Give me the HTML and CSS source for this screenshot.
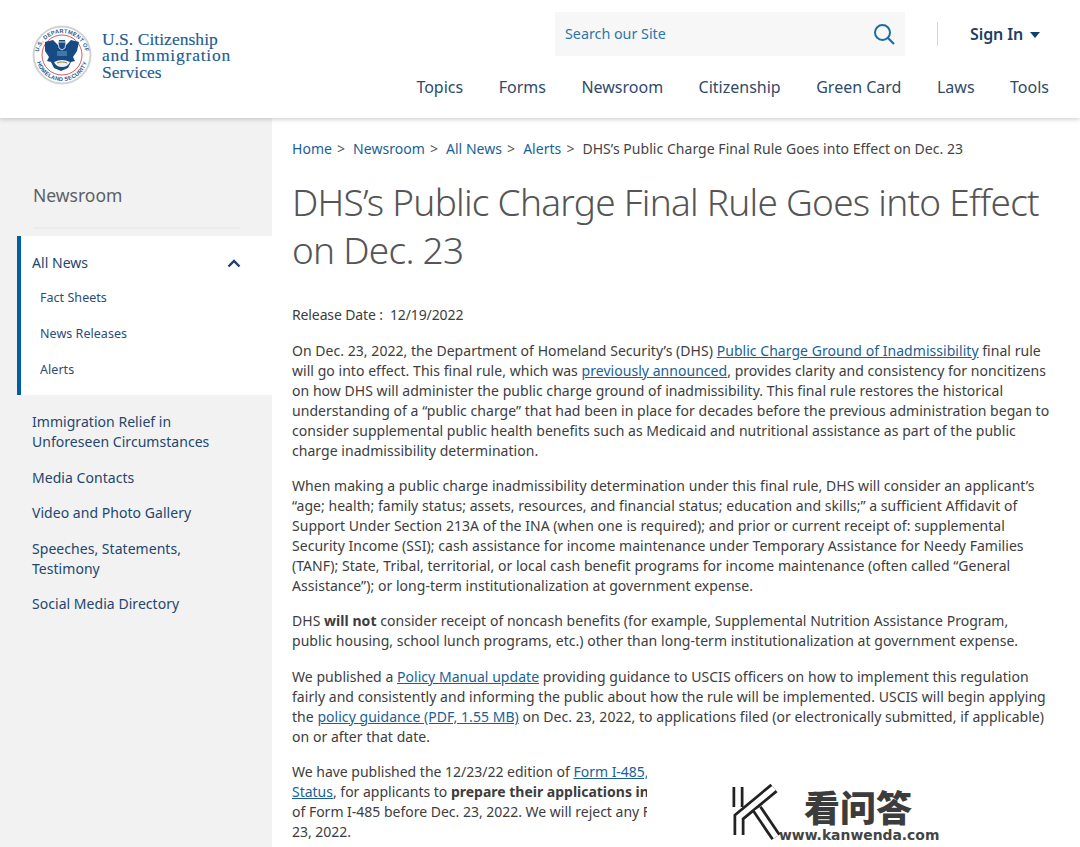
FILE: index.html
```html
<!DOCTYPE html>
<html lang="en">
<head>
<meta charset="utf-8">
<title>DHS's Public Charge Final Rule Goes into Effect on Dec. 23</title>
<link rel="stylesheet" href="styles.css">
</head>
<body>
<header class="site-header">
  <a class="brand" href="#">
    <svg class="seal" viewBox="0 0 60 60" width="60" height="60" aria-hidden="true">
      <defs>
        <path id="ring-top" d="M6 32A24 24 0 0 1 54 32"/>
        <path id="ring-bottom" d="M4 30A26 26 0 0 0 56 30"/>
      </defs>
      <circle cx="30" cy="30" r="29.500" fill="#cfd3d7"/>
      <circle cx="30" cy="30" r="27.500" fill="#fff"/>
      <text class="seal-text"><textPath href="#ring-top" startOffset="50%" text-anchor="middle">U.S. DEPARTMENT OF</textPath></text>
      <text class="seal-text"><textPath href="#ring-bottom" startOffset="50%" text-anchor="middle">HOMELAND SECURITY</textPath></text>
      <circle cx="30" cy="30" r="20" fill="#fff" stroke="#d85a66" stroke-width="1"/>
      <path d="M13 17l8-2 5 5 1-5h6l1 5 5-5 8 2-2 9-4 6 2 4-4 1-3 6-7 3-7-3-3-6-4-1 2-4-4-6z" fill="#174a82"/>
      <path d="M26 17h8l-1 6-3 2-3-2z" fill="#174a82" stroke="#fff" stroke-width=".8"/>
      <path d="M22 37q8-4 16 0-2 5-8 5t-8-5z" fill="#eef1f3"/>
      <path d="M25 38q5-2 10 0" stroke="#9a8a55" stroke-width="1.200" fill="none"/>
      <path d="M25 26h10v5h-10z" fill="#3f78ad"/>
    </svg>
    <span class="brand-name"><span>U.S. Citizenship</span><span class="brand-wide">and Immigration</span><span>Services</span></span>
  </a>
  <div class="header-right">
    <div class="utility">
      <form class="search">
        <span class="search-label">Search our Site</span>
        <svg class="search-icon" viewBox="0 0 22 22" width="22" height="22" aria-hidden="true"><circle cx="9.500" cy="9.500" r="7.500" fill="none" stroke="#1a6ea8" stroke-width="2"/><path d="M15 15l6 6" stroke="#1a6ea8" stroke-width="2.200" fill="none"/></svg>
      </form>
      <div class="signin">Sign In <span class="caret"></span></div>
    </div>
    <nav class="main-nav">
      <a href="#">Topics</a><a href="#">Forms</a><a href="#">Newsroom</a><a href="#">Citizenship</a><a href="#">Green Card</a><a href="#">Laws</a><a href="#">Tools</a>
    </nav>
  </div>
</header>
<div class="layout">
  <aside class="sidebar">
    <h2 class="side-title">Newsroom</h2>
    <div class="side-active">
      <div class="side-head"><a href="#">All News</a>
        <svg viewBox="0 0 14 9" width="14" height="9" aria-hidden="true"><path d="M1.500 7.500L7 2l5.500 5.500" fill="none" stroke="#1c3f72" stroke-width="2.400"/></svg>
      </div>
      <a class="side-sub" href="#">Fact Sheets</a>
      <a class="side-sub" href="#">News Releases</a>
      <a class="side-sub" href="#">Alerts</a>
    </div>
    <ul class="side-list">
      <li><a href="#">Immigration Relief in Unforeseen Circumstances</a></li>
      <li><a href="#">Media Contacts</a></li>
      <li><a href="#">Video and Photo Gallery</a></li>
      <li><a href="#">Speeches, Statements, Testimony</a></li>
      <li><a href="#">Social Media Directory</a></li>
    </ul>
  </aside>
  <main class="content">
    <div class="crumbs"><a href="#">Home</a><span class="sep">&gt;</span><a href="#">Newsroom</a><span class="sep">&gt;</span><a href="#">All News</a><span class="sep">&gt;</span><a href="#">Alerts</a><span class="sep">&gt;</span>DHS’s Public Charge Final Rule Goes into Effect on Dec. 23</div>
    <h1>DHS’s Public Charge Final Rule Goes into Effect on Dec. 23</h1>
    <p class="release">Release Date :&nbsp; 12/19/2022</p>
    <p>On Dec. 23, 2022, the Department of Homeland Security’s (DHS) <a class="u" href="#">Public Charge Ground of Inadmissibility</a> final rule will go into effect. This final rule, which was <a class="u" href="#">previously announced</a>, provides clarity and consistency for noncitizens on how DHS will administer the public charge ground of inadmissibility. This final rule restores the historical understanding of a “public charge” that had been in place for decades before the previous administration began to consider supplemental public health benefits such as Medicaid and nutritional assistance as part of the public charge inadmissibility determination.</p>
    <p>When making a public charge inadmissibility determination under this final rule, DHS will consider an applicant’s “age; health; family status; assets, resources, and financial status; education and skills;” a sufficient Affidavit of Support Under Section 213A of the INA (when one is required); and prior or current receipt of: supplemental Security Income (SSI); cash assistance for income maintenance under Temporary Assistance for Needy Families (TANF); State, Tribal, territorial, or local cash benefit programs for income maintenance (often called “General Assistance”); or long-term institutionalization at government expense.</p>
    <p>DHS <b>will not</b> consider receipt of noncash benefits (for example, Supplemental Nutrition Assistance Program, public housing, school lunch programs, etc.) other than long-term institutionalization at government expense.</p>
    <p>We published a <a class="u" href="#">Policy Manual update</a> providing guidance to USCIS officers on how to implement this regulation fairly and consistently and informing the public about how the rule will be implemented. USCIS will begin applying the <a class="u" href="#">policy guidance (PDF, 1.55 MB)</a> on Dec. 23, 2022, to applications filed (or electronically submitted, if applicable) on or after that date.</p>
    <p class="clipped">We have published the 12/23/22 edition of <a class="u" href="#">Form I-485,</a><br><a class="u" href="#">Status</a>, for applicants to <b>prepare their applications in</b><br>of Form I-485 before Dec. 23, 2022. We will reject any F<br>23, 2022.</p>
  </main>
</div>
<div class="watermark">
  <svg class="wm-k" viewBox="0 0 50 58" width="50" height="58" aria-hidden="true">
    <g class="wm-k-outer"><path d="M6 3v20"/><path d="M42 4L7 33v18"/><path d="M25 25l19 28"/></g>
    <g class="wm-k-inner"><path d="M6 3v20"/><path d="M42 4L7 33v18"/><path d="M25 25l19 28"/></g>
  </svg>
  <div class="wm-text"><span class="wm-cn">看问答</span><span class="wm-url">www.kanwenda.com</span></div>
</div>
</body>
</html>
```
FILE: styles.css
```css
* { box-sizing: border-box; }
html, body { margin: 0; padding: 0; }
body {
  position: relative;
  height: 847px;
  overflow: hidden;
  font-family: "Noto Sans", "Liberation Sans", sans-serif;
  font-size: 14px;
  line-height: 20px;
  letter-spacing: .04px;
  color: #3d3d3d;
  background: #fff;
}
a { color: #1a5f96; text-decoration: none; }
.site-header {
  height: 118px;
  display: flex;
  justify-content: space-between;
  padding: 12px 31px 0 32px;
  box-shadow: 0 1px 5px rgba(0,0,0,.22);
  position: relative;
  z-index: 2;
  background: #fff;
}
.brand { display: flex; align-items: flex-start; gap: 10px; padding-top: 13px; }
.seal { flex: none; }
.seal-text { font-family: "Liberation Sans", sans-serif; font-size: 5.600px; font-weight: 700; fill: #2d5a8e; letter-spacing: .25px; }
.brand-name {
  display: flex;
  flex-direction: column;
  font-family: "Liberation Serif", serif;
  font-size: 17.500px;
  line-height: 16.300px;
  color: #1d5c96;
  padding-top: 6px;
  white-space: nowrap;
  -webkit-text-stroke: .15px #1d5c96;
}
.brand-wide { letter-spacing: .8px; }
.header-right { display: flex; flex-direction: column; align-items: flex-end; }
.utility { display: flex; align-items: center; }
.search {
  width: 350px;
  height: 44px;
  background: #f7f7f7;
  display: flex;
  align-items: center;
  justify-content: space-between;
  padding: 0 10px;
  font-size: 14.300px;
  letter-spacing: 0;
  color: #2a76ad;
}
.signin {
  margin-left: 32px;
  border-left: 1px solid #d5d5d5;
  height: 24px;
  width: 112px;
  padding-left: 32px;
  font-size: 16px;
  font-weight: 600;
  line-height: 24px;
  letter-spacing: -.1px;
  color: #1c3f66;
  white-space: nowrap;
}
.caret {
  display: inline-block;
  margin-left: 3px;
  vertical-align: 2px;
  border: 5.500px solid transparent;
  border-top: 6px solid #123f72;
  border-bottom: 0;
}
.main-nav { display: flex; gap: 35.500px; margin-top: 19px; font-size: 16px; line-height: 24px; letter-spacing: 0; }
.main-nav a { color: #2f4a6b; }
.layout { display: flex; height: 729px; }
.sidebar { width: 272px; flex: none; background: #f2f2f2; padding-top: 65px; }
.side-title {
  margin: 0 32px 0 33px;
  font-size: 17.500px;
  font-weight: 400;
  line-height: 24px;
  letter-spacing: 0;
  color: #5b6066;
  padding-bottom: 20px;
  border-bottom: 2px solid #ececec;
}
.side-active {
  margin: 7px 0 0 17px;
  background: #fff;
  border-left: 4px solid #005ea2;
  height: 159px;
  padding-top: 17px;
  display: flex;
  flex-direction: column;
}
.side-head { display: flex; justify-content: space-between; align-items: center; padding: 0 31px 0 11px; height: 20px; margin-bottom: 7px; }
.side-head a { color: #24466f; }
.side-sub { display: block; margin-left: 19px; height: 36px; line-height: 36px; font-size: 12.500px; color: #2b4c76; }
.side-list { list-style: none; margin: 17px 30px 0 32px; padding: 0; }
.side-list li { margin-bottom: 15.600px; }
.side-list a { color: #24466f; }
.content { flex: 1; padding: 21px 30px 0 20px; min-width: 0; }
.crumbs { font-size: 14px; line-height: 20px; white-space: nowrap; color: #444; }
.sep { margin: 0 8px 0 5px; color: #555; }
h1 {
  margin: 19px 0 0;
  font-size: 37px;
  line-height: 48px;
  font-weight: 300;
  letter-spacing: -.740px;
  color: #555;
}
p { margin: 0 0 15.200px; }
.release { margin-top: 31px; margin-bottom: 16px; letter-spacing: -.12px; }
.clipped { letter-spacing: -.01px; }
.u { text-decoration: underline; }
.watermark {
  position: absolute;
  left: 647px;
  top: 760px;
  width: 433px;
  height: 87px;
  background: #fff;
  z-index: 3;
  display: flex;
  padding: 25px 0 0 133px;
}
.wm-k { position: absolute; left: 85px; top: 24px; }
.wm-k-outer, .wm-k-inner { fill: none; stroke-linejoin: miter; }
.wm-k-outer path { stroke: #222; stroke-width: 11; }
.wm-k-inner path { stroke: #fff; stroke-width: 5.500; }
.wm-text { display: flex; flex-direction: column; margin-left: -1px; }
.wm-cn { font-family: "Noto Sans CJK SC", sans-serif; font-weight: 900; font-size: 36px; line-height: 43px; letter-spacing: 0; color: #3c3c3c; margin-left: 25px; }
.wm-url { font-family: "DejaVu Sans", sans-serif; font-weight: 700; font-size: 13.900px; line-height: 15px; letter-spacing: 0; color: #444; }
```
